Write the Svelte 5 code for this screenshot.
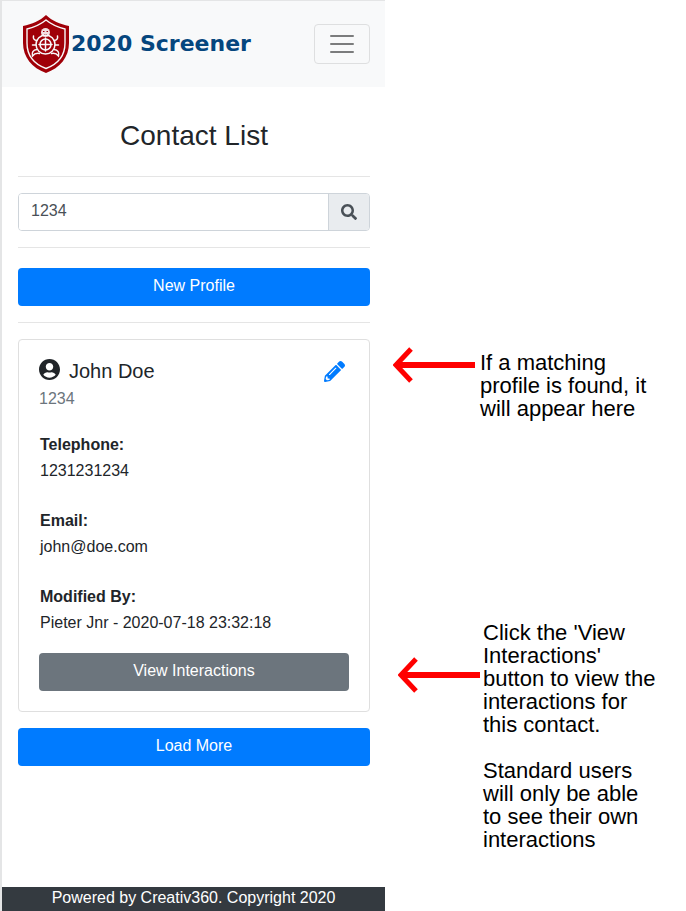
<script>
  let query = $state('1234');

  const contact = {
    name: 'John Doe',
    id: '1234',
    fields: [
      { label: 'Telephone:', value: '1231231234' },
      { label: 'Email:', value: 'john@doe.com' },
      { label: 'Modified By:', value: 'Pieter Jnr - 2020-07-18 23:32:18' }
    ]
  };
</script>

{#snippet arrow()}
  <svg class="arrow" viewBox="0 0 82 36" aria-hidden="true">
    <path d="M18 2 3 18l15 16" fill="none" stroke="#f00" stroke-width="5" />
    <path d="M82 18H4" stroke="#f00" stroke-width="6" />
  </svg>
{/snippet}

<div class="page">
  <div class="app">
    <header>
      <a class="brand" href="#home">
        <svg class="shield" viewBox="0 0 46 58" aria-hidden="true">
          <path d="M23 0C17 6 9 9 0 11v17c0 14 9 25 23 30 14-5 23-16 23-30V11C37 9 29 6 23 0Z" fill="#a00008" />
          <path d="M23 5C17 10 10 12.500 4 14V28C4 40 11 49 23 53.500 35 49 42 40 42 28V14C36 12.500 29 10 23 5Z" fill="none" stroke="#f8f9fa" stroke-width="1.400" />
          <circle cx="22.500" cy="17.500" r="4.500" fill="#f3dfe1" />
          <path d="M20 16.500h1.500M23.500 16.500H25M21 19.500h3" stroke="#a00008" stroke-width="1.200" />
          <g fill="none" stroke="#f8f9fa" stroke-width="1.500" stroke-linecap="round">
            <circle cx="22.500" cy="29.500" r="9.500" />
            <circle cx="22.500" cy="29.500" r="5.500" />
            <path d="M22.500 23v13M16 29.500h13" />
            <path d="M14 25.500c-3 0-4-2-3.500-4.500M31 25.500c3 0 4-2 3.500-4.500M13 30H9.500M32 30h3.500" />
            <path d="M14 34.500c-4 .5-5.500 3-4.500 6.500 2-2.500 4.500-3 7-2.500M31 34.500c4 .5 5.500 3 4.500 6.500-2-2.500-4.500-3-7-2.500" />
          </g>
        </svg>
        <span>2020 Screener</span>
      </a>
      <button class="toggler" aria-label="Toggle navigation">
        <svg viewBox="0 0 30 30" aria-hidden="true">
          <path d="M4 7h22M4 15h22M4 23h22" stroke="#7b7c7d" stroke-width="2" stroke-linecap="round" />
        </svg>
      </button>
    </header>

    <main>
      <h1>Contact List</h1>
      <hr />
      <form class="search" onsubmit={(e) => e.preventDefault()}>
        <input type="text" aria-label="Search contacts" bind:value={query} />
        <button aria-label="Search">
          <svg viewBox="0 0 512 512" aria-hidden="true">
            <path fill="#495057" d="M505 442.700 405.300 343c-4.500-4.500-10.600-7-17-7H372c27.600-35.300 44-79.700 44-128C416 93.100 322.900 0 208 0S0 93.100 0 208s93.100 208 208 208c48.300 0 92.700-16.400 128-44v16.300c0 6.400 2.500 12.500 7 17l99.700 99.700c9.400 9.400 24.600 9.400 33.900 0l28.300-28.300c9.400-9.400 9.400-24.600.1-34zM208 336c-70.700 0-128-57.200-128-128 0-70.700 57.200-128 128-128 70.700 0 128 57.200 128 128 0 70.700-57.200 128-128 128z" />
          </svg>
        </button>
      </form>
      <hr />
      <button class="btn primary new">New Profile</button>
      <hr />

      <article class="card">
        <div class="title">
          <svg class="user" viewBox="0 0 496 496" aria-hidden="true">
            <path fill="#212529" d="M248 0C111 0 0 111 0 248s111 248 248 248 248-111 248-248S385 0 248 0zm0 96c48.600 0 88 39.400 88 88s-39.400 88-88 88-88-39.400-88-88 39.400-88 88-88zm0 344c-58.700 0-111.300-26.600-146.500-68.200 18.800-35.400 55.600-59.800 98.500-59.800 2.400 0 4.800.4 7.100 1.100 13 4.200 26.600 6.900 40.900 6.900 14.300 0 28-2.700 40.900-6.900 2.300-.7 4.700-1.100 7.100-1.100 42.900 0 79.700 24.400 98.500 59.800C359.300 413.400 306.700 440 248 440z" />
          </svg>
          <h2>{contact.name}</h2>
          <a class="edit" href="#edit" aria-label="Edit profile">
            <svg viewBox="0 0 512 512" aria-hidden="true">
              <path fill="#007bff" d="M497.900 142.100l-46.100 46.100c-4.700 4.700-12.300 4.700-17 0l-111-111c-4.700-4.700-4.700-12.300 0-17l46.100-46.100c18.700-18.700 49.100-18.700 67.900 0l60.100 60.100c18.800 18.700 18.800 49.100 0 67.900zM284.200 99.800L21.600 362.400.4 483.900c-2.900 16.400 11.400 30.600 27.800 27.800l121.500-21.300 262.600-262.600c4.700-4.700 4.700-12.300 0-17l-111-111c-4.800-4.700-12.400-4.700-17.100 0zM124.100 339.900c-5.500-5.500-5.500-14.300 0-19.800l154-154c5.500-5.500 14.300-5.500 19.800 0s5.500 14.300 0 19.800l-154 154c-5.500 5.500-14.300 5.500-19.800 0zM88 424h48v36.300l-64.500 11.300-31.100-31.100L51.700 376H88v48z" />
            </svg>
          </a>
        </div>
        <p class="id">{contact.id}</p>
        <dl>
          {#each contact.fields as field}
            <div>
              <dt>{field.label}</dt>
              <dd>{field.value}</dd>
            </div>
          {/each}
        </dl>
        <button class="btn secondary">View Interactions</button>
      </article>

      <button class="btn primary">Load More</button>
    </main>

    <footer>Powered by Creativ360. Copyright 2020</footer>
  </div>

  <aside>
    <section class="note">
      {@render arrow()}
      <p>If a matching profile is found, it will appear here</p>
    </section>
    <section class="note lower">
      {@render arrow()}
      <div>
        <p>Click the 'View Interactions' button to view the interactions for this contact.</p>
        <p>Standard users will only be able to see their own interactions</p>
      </div>
    </section>
  </aside>
</div>

<style>
  :global(body) {
    background: #fff;
    color: #212529;
    font: 16px/24px "Liberation Sans", Arial, sans-serif;
  }

  .page, .page * {
    box-sizing: border-box;
  }

  .page {
    display: grid;
    grid-template-columns: 385fr 301fr;
    min-height: 100vh;
  }

  h1, h2, p, dl, dd {
    margin: 0;
  }

  button, input {
    font: inherit;
  }

  .app {
    display: flex;
    flex-direction: column;
    border-left: 2px solid #e4e5e6;
  }

  header {
    display: flex;
    align-items: center;
    justify-content: space-between;
    padding: 14px 15px 14px 21px;
    border-top: 1px solid #e4e5e6;
    background: #f8f9fa;
  }

  .brand {
    display: flex;
    align-items: center;
    gap: 2px;
    color: #05467e;
    font: bold 22px/30px "DejaVu Sans", sans-serif;
    text-decoration: none;
    white-space: nowrap;
  }

  .shield {
    width: 46px;
    height: 58px;
  }

  .toggler {
    display: flex;
    padding: 4px 12px;
    border: 1px solid #dedfe0;
    border-radius: 4px;
    background: transparent;
  }

  .toggler svg {
    width: 30px;
    height: 30px;
  }

  main {
    display: flex;
    flex: 1;
    flex-direction: column;
    padding: 32px 15px 16px 16px;
  }

  h1 {
    margin-bottom: 24px;
    font-size: 28px;
    font-weight: 400;
    line-height: 33px;
    text-align: center;
  }

  hr {
    width: 100%;
    margin: 0 0 16px;
    border: 0;
    border-top: 1px solid #e5e5e5;
  }

  .search {
    display: flex;
    height: 38px;
    margin-bottom: 16px;
    border: 1px solid #ced4da;
    border-radius: 4px;
    overflow: hidden;
  }

  .search input {
    flex: 1;
    min-width: 0;
    padding: 0 12px 2px;
    border: 0;
    background: #fff;
    color: #495057;
  }

  .search button {
    display: flex;
    align-items: center;
    padding: 0 12px;
    border: 0;
    border-left: 1px solid #ced4da;
    background: #e9ecef;
  }

  .search svg {
    width: 16px;
    height: 16px;
  }

  .btn {
    width: 100%;
    height: 38px;
    padding: 0 12px 2px;
    border: 0;
    border-radius: 4px;
    color: #fff;
  }

  .primary {
    background: #007bff;
  }

  .secondary {
    background: #6c757d;
  }

  .new {
    margin: 4px 0 16px;
  }

  .card {
    margin-bottom: 16px;
    padding: 19px 20px 20px;
    border: 1px solid #dfdfdf;
    border-radius: 4px;
  }

  .title {
    display: flex;
    align-items: center;
    gap: 9px;
    height: 24px;
  }

  .user {
    width: 21px;
    height: 21px;
    margin-bottom: 4px;
  }

  h2 {
    font-size: 20px;
    font-weight: 400;
    line-height: 24px;
  }

  .edit {
    display: flex;
    margin: 0 4px 0 auto;
  }

  .edit svg {
    width: 21px;
    height: 21px;
  }

  .id {
    margin: 4px 0 21px;
    color: #6c757d;
  }

  dl {
    display: flex;
    flex-direction: column;
    gap: 24px;
    margin-bottom: 17px;
    padding-left: 1px;
    line-height: 26px;
  }

  dt {
    font-weight: 700;
  }

  footer {
    padding-bottom: 2px;
    background: #343a40;
    color: #fff;
    line-height: 22px;
    text-align: center;
  }

  aside {
    display: flex;
    flex-direction: column;
    gap: 201px;
    padding: 347px 32px 16px 8px;
    color: #000;
    font-size: 22px;
    line-height: 23px;
  }

  .note {
    display: flex;
    align-items: flex-start;
    gap: 5px;
  }

  .note > p {
    padding-top: 4px;
  }

  .arrow {
    flex: none;
    width: 82px;
    height: 36px;
  }

  .lower {
    gap: 3px;
    margin: 0 -8px 0 5px;
  }

  .lower .arrow {
    margin-top: 36px;
  }

  .lower p + p {
    margin-top: 23px;
  }
</style>
